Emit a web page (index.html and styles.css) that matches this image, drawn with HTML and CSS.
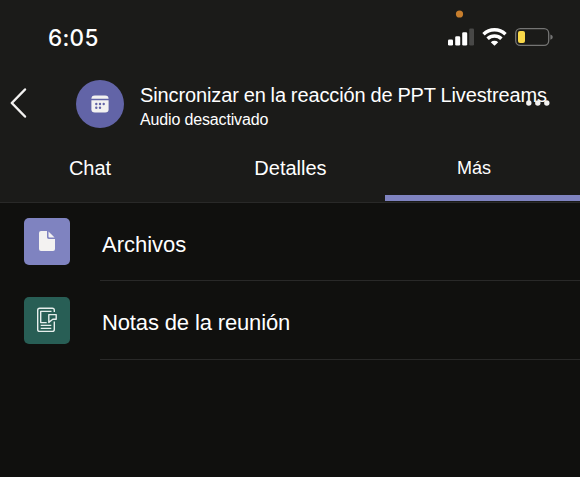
FILE: index.html
```html
<!DOCTYPE html>
<html lang="es">
<head>
<meta charset="utf-8">
<title>Reunión</title>
<link rel="stylesheet" href="styles.css">
</head>
<body>
<div class="top">
  <div class="status">
    <span class="time">6:05</span>
    <svg class="status-icons" width="106" height="50" viewBox="0 0 106 50">
      <circle cx="12.5" cy="14" r="3.6" fill="#c77e2d"/>
      <g fill="#fff">
        <rect x="1" y="39.5" width="5" height="6" rx="1.3"/>
        <rect x="8.2" y="36.3" width="5" height="9.2" rx="1.3"/>
        <rect x="15.2" y="32.3" width="5" height="13.2" rx="1.3"/>
        <rect x="22.2" y="28.5" width="4.8" height="17" rx="1.3" fill="#484847"/>
      </g>
      <g fill="none" stroke="#fff" stroke-width="3.4">
        <path d="M36.5 34.2a15.7 15.7 0 0 1 22 0"/>
        <path d="M40.600 38.800a9.800 9.800 0 0 1 13.800 0"/>
      </g>
      <path d="M47.5 45.8l-3.7-3.6a5.4 5.4 0 0 1 7.400 0z" fill="#fff"/>
      <rect x="68.7" y="28.7" width="33" height="16.6" rx="4.6" fill="none" stroke="#747473" stroke-width="1.3"/>
      <rect x="71" y="31" width="7" height="12" rx="2" fill="#f9d849"/>
      <path d="M103.4 34.5q2.4.6 2.4 2.6t-2.4 2.6z" fill="#747473"/>
    </svg>
  </div>
  <header class="head">
    <svg class="back" width="20" height="32" viewBox="0 0 20 32"><path d="M16 2.500L2.800 16 16 29.500" fill="none" stroke="#f3f2f1" stroke-width="2.500" stroke-linecap="round" stroke-linejoin="round"/></svg>
    <div class="avatar">
      <svg width="18" height="18" viewBox="0 0 18 18">
        <path d="M.4 3.8Q.4.4 3.8.4h10.4q3.4 0 3.400 3.400z" fill="#f3f2f1"/>
        <path d="M.4 5.2h17.2v9q0 3.200-3.400 3.200H3.800Q.4 17.400.4 14.200z" fill="#f3f2f1"/>
        <g fill="#6264a7"><circle cx="5.300" cy="9" r="1.200"/><circle cx="9" cy="9" r="1.200"/><circle cx="12.700" cy="9" r="1.200"/><circle cx="5.300" cy="12.700" r="1.200"/><circle cx="9" cy="12.700" r="1.200"/></g>
      </svg>
    </div>
    <div class="titles">
      <div class="title">Sincronizar en la reacción de PPT Livestreams</div>
      <div class="sub">Audio desactivado</div>
    </div>
    <svg class="more" width="26" height="6" viewBox="0 0 26 6" fill="#f3f2f1"><circle cx="3.800" cy="3" r="2.700"/><circle cx="12.800" cy="3" r="2.700"/><circle cx="21.800" cy="3" r="2.700"/></svg>
  </header>
  <nav class="tabs">
    <div class="tab chat"><span>Chat</span></div>
    <div class="tab details"><span>Detalles</span></div>
    <div class="tab active"><span>Más</span></div>
  </nav>
</div>
<main class="list">
  <div class="row">
    <div class="tile files">
      <svg width="16" height="20" viewBox="0 0 16 20" fill="#f3f2f1"><path d="M2 0h6v6.200q0 1.800 1.800 1.800H16v10q0 2-2 2H2q-2 0-2-2V2q0-2 2-2z"/><path d="M9.500.4L15.600 6.600h-5q-1.100 0-1.100-1.100z"/></svg>
    </div>
    <div class="label archivos"><span>Archivos</span></div>
  </div>
  <div class="row">
    <div class="tile notes">
      <svg width="22" height="26" viewBox="0 0 22 26" fill="none" stroke="#e6eeec" stroke-width="1.400" stroke-linejoin="round">
        <path d="M18.300 5V3.200Q18.300 1.200 16.300 1.200H3.700Q1.700 1.200 1.700 3.200v19.200q0 2 2 2h12.600q2 0 2-2V14.500"/>
        <path d="M15.500 4.400H4.700v11.200h6"/>
        <path d="M12.800 7.600h7.400v4.600h-3.400l-4 3.200z"/>
        <path d="M4.700 18.400h10.600M4.700 21.400h10.600"/>
      </svg>
    </div>
    <div class="label notas"><span>Notas de la reunión</span></div>
  </div>
</main>
</body>
</html>
```
FILE: styles.css
```css
* { box-sizing: border-box; }
body {
  margin: 0;
  height: 477px;
  overflow: hidden;
  background: #10100e;
  color: #fff;
  font-family: "Liberation Sans", Arial, sans-serif;
}
svg { display: block; }
.top { height: 203px; background: #1b1b19; border-bottom: 1px solid #292928; }
.status {
  height: 74px;
  padding: 0 27px 0 48px;
  display: flex;
  justify-content: space-between;
}
.time {
  padding-top: 23px;
  font: 500 22.5px/30px Inter, sans-serif;
  letter-spacing: 0.3px;
}
.head { position: relative; height: 70px; display: flex; }
.back { margin: 13px 0 0 9px; }
.avatar {
  width: 48px;
  height: 48px;
  margin: 5.5px 0 0 47px;
  border-radius: 50%;
  background: #6264a7;
  display: flex;
  align-items: center;
  justify-content: center;
}
.titles { margin-left: 16px; padding-top: 9px; white-space: nowrap; }
.title { font-size: 20px; line-height: 24px; letter-spacing: -0.12px; word-spacing: -0.5px; }
.sub { font-size: 16px; line-height: 26px; letter-spacing: -0.15px; }
.more { position: absolute; left: 525px; top: 26px; }
.tabs { height: 58px; display: grid; grid-template-columns: 180px 205px 195px; }
.tab { text-align: center; font-size: 20px; line-height: 48px; }
.details { padding-left: 16px; }
.active { height: 57px; font-size: 18px; border-bottom: 6px solid #7f83c0; padding-right: 17px; }
.list { padding-left: 23px; }
.row { height: 78px; display: flex; }
.row + .row { height: 79px; }
.tile {
  width: 46.5px;
  height: 46.5px;
  margin: 15px 0 0 0.5px;
  border-radius: 5px;
  display: flex;
  align-items: center;
  justify-content: center;
}
.row + .row .tile { margin-top: 16px; }
.files { background: #7f83c0; }
.notes { background: #285e55; }
.label {
  flex: 1;
  margin-left: 30px;
  padding-left: 2px;
  border-bottom: 1px solid #292928;
  font-size: 22px;
  line-height: 83px;
}
.notas { letter-spacing: -0.14px; }
```
